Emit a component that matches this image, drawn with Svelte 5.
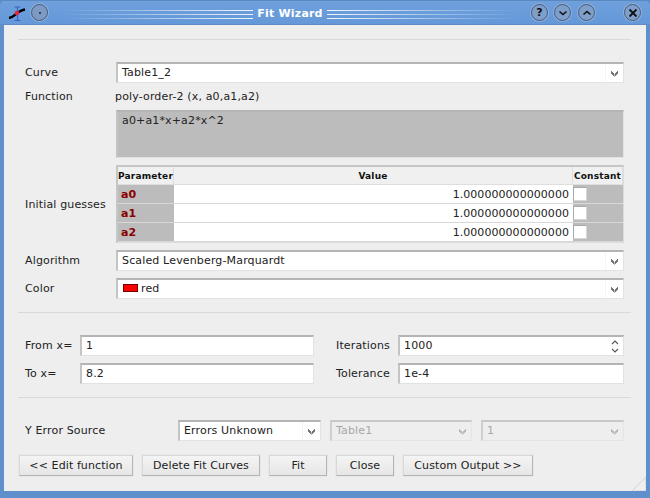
<script>
  const params = ['a0', 'a1', 'a2'];
</script>

<div class="window">
  <header class="titlebar">
    <svg class="app-icon" width="20" height="18" viewBox="0 0 20 18">
      <path d="M7.500 3H13.500M10.500 3V16.500M7.500 16.500H13.500" stroke="#3f63c4" stroke-width="1.200" fill="none"/>
      <path d="M2 14C5.500 13.500 7 11.500 9 10C11.500 8 14 6 18 5.500" stroke="#000" stroke-width="2.400" fill="none"/>
      <circle cx="10" cy="9" r="2.300" fill="#e8263a"/>
    </svg>
    <span class="win-btn pin"><i></i></span>
    <span class="stripes left"></span>
    <span class="title">Fit Wizard</span>
    <span class="stripes right"></span>
    <span class="win-btn help">?</span>
    <span class="win-btn down">
      <svg width="10" height="10" viewBox="0 0 10 10"><path d="M1.500 3.500L5 6.500L8.500 3.500" stroke="#111" stroke-width="1.600" fill="none"/></svg>
    </span>
    <span class="win-btn">
      <svg width="10" height="10" viewBox="0 0 10 10"><path d="M1.500 6.500L5 3.500L8.500 6.500" stroke="#111" stroke-width="1.600" fill="none"/></svg>
    </span>
    <span class="win-btn close">
      <svg width="10" height="10" viewBox="0 0 10 10"><path d="M1.500 1.500L8.500 8.500M8.500 1.500L1.500 8.500" stroke="#111" stroke-width="1.800" fill="none"/></svg>
    </span>
  </header>

  <main class="content">
    <hr class="first" />

    <section class="form">
      <span class="label">Curve</span>
      <div class="field combo"><span>Table1_2</span><b class="arrow"></b></div>

      <span class="label">Function</span>
      <span class="func-name">poly-order-2 (x, a0,a1,a2)</span>

      <span></span>
      <div class="field formula">a0+a1*x+a2*x^2</div>

      <span class="label">Initial guesses</span>
      <div class="table">
        <div class="th">Parameter</div>
        <div class="th">Value</div>
        <div class="th">Constant</div>
        {#each params as p}
          <div class="param">{p}</div>
          <div class="value">1.000000000000000</div>
          <div class="check"><i></i></div>
        {/each}
      </div>

      <span class="label">Algorithm</span>
      <div class="field combo"><span>Scaled Levenberg-Marquardt</span><b class="arrow"></b></div>

      <span class="label">Color</span>
      <div class="field combo"><span class="swatch"></span><span>red</span><b class="arrow"></b></div>
    </section>

    <hr class="mid" />

    <section class="limits">
      <span class="label">From x=</span>
      <div class="field line">1</div>
      <span class="label">Iterations</span>
      <div class="field line spin">
        <span>1000</span>
        <svg width="8" height="15" viewBox="0 0 8 15"><path d="M1 5L4 2L7 5M1 10L4 13L7 10" stroke="#555" stroke-width="1.100" fill="none"/></svg>
      </div>
      <span class="label">To x=</span>
      <div class="field line">8.2</div>
      <span class="label">Tolerance</span>
      <div class="field line">1e-4</div>
    </section>

    <hr class="last" />

    <section class="errors">
      <span class="label">Y Error Source</span>
      <div class="field combo"><span>Errors Unknown</span><b class="arrow"></b></div>
      <div class="field combo off"><span>Table1</span><b class="arrow"></b></div>
      <div class="field combo off"><span>1</span><b class="arrow"></b></div>
    </section>

    <footer class="buttons">
      <button class="b1">&lt;&lt; Edit function</button>
      <button class="b2">Delete Fit Curves</button>
      <button class="b3">Fit</button>
      <button class="b3">Close</button>
      <button class="b4">Custom Output &gt;&gt;</button>
    </footer>

    <svg class="grip" width="14" height="14" viewBox="0 0 14 14">
      <path d="M14 0L0 14M14 0V14H0" stroke="#d4d4d4" fill="none"/>
    </svg>
  </main>
</div>

<style>
  :global(body) {
    margin: 0;
    background: #5b8cc8;
  }

  .window {
    width: 650px;
    height: 498px;
    display: flex;
    flex-direction: column;
    box-sizing: border-box;
    padding: 0 4px 7px 4px;
    background: #5f90cc;
    border-radius: 6px 6px 0 0;
    font-family: "DejaVu Sans", sans-serif;
    font-size: 11px;
    color: #222;
    overflow: hidden;
  }

  .titlebar {
    height: 25px;
    flex: none;
    display: flex;
    align-items: center;
    background: linear-gradient(#6ea0dc, #6498d8);
    margin: 0 -4px;
    padding: 0 0 0 7px;
    border-top: 1px solid #5a88c0;
    border-bottom: 1px solid #5f8cc6;
    box-sizing: border-box;
  }

  .app-icon {
    flex: none;
    margin-right: 4px;
  }

  .win-btn {
    flex: none;
    width: 15px;
    height: 15px;
    border-radius: 50%;
    border: 1px solid #44587a;
    background: #7f9fcb;
    box-shadow: 0 0 0 1px #8fb0dc;
    display: flex;
    align-items: center;
    justify-content: center;
    margin-left: 7px;
    font-weight: bold;
    font-size: 11px;
    color: #111;
  }

  .pin {
    margin-left: 0;
    background: #7e9ac4;
  }

  .pin i {
    width: 2px;
    height: 2px;
    border-radius: 50%;
    background: #223;
  }

  .help {
    margin-left: 0;
  }

  .down {
    margin-left: 6px;
  }

  .close {
    margin-left: 29px;
  }

  .stripes {
    flex: none;
    width: 193px;
    height: 9px;
    margin-top: 4px;
    background-image: linear-gradient(to bottom, #ffffff 0 1px, transparent 1px);
    background-size: 100% 4px;
  }

  .stripes.left {
    margin-left: 12px;
    -webkit-mask-image: linear-gradient(to right, transparent, rgba(255, 255, 255, 0.9));
    mask-image: linear-gradient(to right, transparent, rgba(255, 255, 255, 0.9));
  }

  .stripes.right {
    margin-right: 11px;
    -webkit-mask-image: linear-gradient(to left, transparent, rgba(255, 255, 255, 0.9));
    mask-image: linear-gradient(to left, transparent, rgba(255, 255, 255, 0.9));
  }

  .title {
    width: 74px;
    flex: none;
    text-align: center;
    color: #fff;
    font-weight: bold;
    font-size: 11px;
    letter-spacing: 0.2px;
    margin-top: 1px;
  }

  .content {
    position: relative;
    flex: 1;
    background: #eeeeee;
    padding: 14px 15px 0 14px;
    box-sizing: border-box;
    display: flex;
    flex-direction: column;
  }

  hr {
    height: 1px;
    margin: 0;
    border: none;
    background: #d9d9d9;
    flex: none;
  }

  .form {
    display: grid;
    grid-template-columns: 91px 508px;
    margin: 22px 0 0 7px;
    row-gap: 7px;
    align-items: center;
  }

  .label {
    white-space: nowrap;
    letter-spacing: 0.15px;
  }

  .field {
    box-sizing: border-box;
    height: 21px;
    background: #fff;
    border-top: 2px solid #b4b4b4;
    border-left: 2px solid #c4c4c4;
    border-right: 1px solid #e2e2e2;
    border-bottom: 1px solid #e2e2e2;
    display: flex;
    align-items: center;
    padding: 0 5px 2px 4px;
    letter-spacing: 0.15px;
    white-space: nowrap;
  }

  .combo {
    position: relative;
    padding-right: 20px;
  }

  .arrow {
    position: absolute;
    right: 5px;
    top: 6px;
    width: 7px;
    height: 7px;
    background: linear-gradient(45deg, transparent 36%, #777 36% 64%, transparent 64%) left / 50% 100% no-repeat,
      linear-gradient(-45deg, transparent 36%, #777 36% 64%, transparent 64%) right / 50% 100% no-repeat;
  }

  .arrow::before {
    content: "";
    position: absolute;
    left: -6px;
    top: -6px;
    height: 18px;
    border-left: 1px solid #f4f4f4;
  }

  .func-name {
    letter-spacing: 0.15px;
    height: 13px;
    line-height: 13px;
    margin-left: -1px;
  }

  .formula {
    height: 48px;
    background: #bcbcbc;
    align-items: flex-start;
    padding-top: 2px;
  }

  .table {
    height: 78px;
    box-sizing: border-box;
    display: grid;
    grid-template-columns: 56px 1fr 50px;
    grid-template-rows: 18px 19px 19px 19px;
    border-top: 2px solid #c6c6c6;
    border-left: 2px solid #c6c6c6;
    border-right: 1px solid #dcdcdc;
    border-bottom: 1px solid #dcdcdc;
    background: #dcdcdc;
  }

  .th {
    background: #f0f0f0;
    font-weight: bold;
    font-size: 9px;
    letter-spacing: 0.2px;
    color: #111;
    display: flex;
    align-items: center;
    justify-content: center;
    border-right: 1px solid #dedede;
    border-bottom: 1px solid #dedede;
  }

  .param {
    background: #bcbcbc;
    color: #8b0000;
    font-weight: bold;
    font-size: 11px;
    padding-left: 3px;
    display: flex;
    align-items: center;
    border-bottom: 1px solid #d8d8d8;
  }

  .value {
    background: #fff;
    display: flex;
    align-items: center;
    justify-content: flex-end;
    padding-right: 4px;
    letter-spacing: 0.05px;
    border-bottom: 1px solid #d8d8d8;
  }

  .check {
    background: #bcbcbc;
    display: flex;
    align-items: center;
    border-bottom: 1px solid #d8d8d8;
  }

  .check i {
    box-sizing: border-box;
    width: 14px;
    height: 14px;
    background: #fff;
    border: 1px solid #a8a8a8;
    border-right-color: #d6d6d6;
    border-bottom-color: #d6d6d6;
  }

  .swatch {
    width: 15px;
    height: 8px;
    box-sizing: border-box;
    background: #f00;
    border: 1px solid #700;
    margin: 0 3px 0 1px;
  }

  .mid {
    margin-top: 13px;
  }

  .limits {
    display: grid;
    grid-template-columns: 55px 234px 84px 226px;
    margin: 22px 0 0 7px;
    row-gap: 7px;
    align-items: center;
  }

  .limits .label:nth-child(3),
  .limits .label:nth-child(7) {
    padding-left: 22px;
  }

  .spin {
    justify-content: space-between;
    padding-right: 4px;
    padding-bottom: 0;
  }

  .spin span {
    margin-bottom: 2px;
  }

  .last {
    margin-top: 13px;
  }

  .errors {
    display: grid;
    grid-template-columns: 144px 143px 142px 143px;
    column-gap: 9px;
    margin: 22px 0 0 7px;
    align-items: center;
  }

  .off {
    background: #eeeeee;
    color: #a8a8a8;
    border-color: #c8c8c8 #e4e4e4 #e4e4e4 #cfcfcf;
  }

  .off .arrow {
    opacity: 0.45;
  }

  .buttons {
    display: flex;
    gap: 9px;
    margin: 14px 0 0 1px;
  }

  button {
    box-sizing: border-box;
    height: 21px;
    padding: 0;
    font: inherit;
    letter-spacing: 0.1px;
    color: #222;
    background: linear-gradient(#f4f4f4, #e6e6e6);
    border: 1px solid #b4b4b4;
    border-top-color: #d8d8d8;
    border-left-color: #d8d8d8;
    box-shadow: 0 0 0 1px #e8e8e8;
    white-space: nowrap;
  }

  .b1 { width: 114px; }
  .b2 { width: 118px; }
  .b3 { width: 58px; }
  .b4 { width: 130px; }

  .grip {
    position: absolute;
    right: 0;
    bottom: 0;
  }
</style>
